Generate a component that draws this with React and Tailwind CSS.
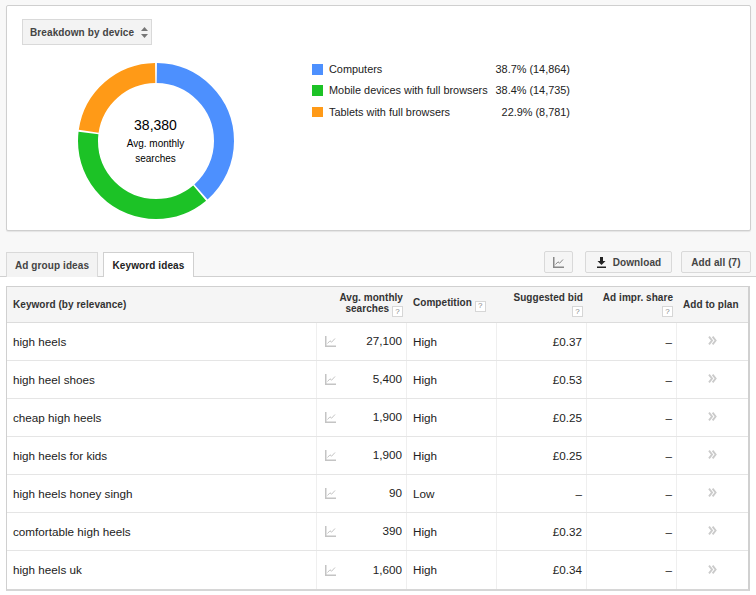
import React from 'react';

const legend = [
  { label: 'Computers', value: '38.7% (14,864)', color: 'bg-[#4d90fe]' },
  { label: 'Mobile devices with full browsers', value: '38.4% (14,735)', color: 'bg-[#1cc226]' },
  { label: 'Tablets with full browsers', value: '22.9% (8,781)', color: 'bg-[#ff9a17]' },
];

const rows = [
  { keyword: 'high heels', searches: '27,100', competition: 'High', bid: '£0.37' },
  { keyword: 'high heel shoes', searches: '5,400', competition: 'High', bid: '£0.53' },
  { keyword: 'cheap high heels', searches: '1,900', competition: 'High', bid: '£0.25' },
  { keyword: 'high heels for kids', searches: '1,900', competition: 'High', bid: '£0.25' },
  { keyword: 'high heels honey singh', searches: '90', competition: 'Low', bid: '–' },
  { keyword: 'comfortable high heels', searches: '390', competition: 'High', bid: '£0.32' },
  { keyword: 'high heels uk', searches: '1,600', competition: 'High', bid: '£0.34' },
];

function TrendIcon({ className = 'text-[#c4c4c4]' }) {
  return (
    <svg width="11" height="11" viewBox="0 0 11 11" className={className} fill="none" stroke="currentColor">
      <path d="M0.75 0v10.25H11" strokeWidth="1.5" />
      <path d="M2.500 7.500L5 4.800l1.600 1.400L10 2.500" strokeWidth="1" />
    </svg>
  );
}

function AddIcon() {
  return (
    <svg width="9" height="9" viewBox="0 0 9 9" fill="none" stroke="#cbcbcb" strokeWidth="1.9">
      <path d="M1 0.700L4 4.500L1 8.300" />
      <path d="M4.600 0.700L7.600 4.500L4.600 8.300" />
    </svg>
  );
}

function Help() {
  return (
    <span className="inline-flex h-[11px] w-[11px] items-center justify-center border border-[#d6d6d6] bg-white align-[-2px] text-[8px] font-normal leading-none text-[#888]">
      ?
    </span>
  );
}

function Donut() {
  const r = 68;
  return (
    <div className="relative h-[158px] w-[158px]">
      <svg width="158" height="158" viewBox="0 0 158 158" className="-rotate-90">
        <circle cx="79" cy="79" r={r} fill="none" stroke="#4d90fe" strokeWidth="20" pathLength="100" strokeDasharray="38.3 61.7" strokeDashoffset="-0.2" />
        <circle cx="79" cy="79" r={r} fill="none" stroke="#1cc226" strokeWidth="20" pathLength="100" strokeDasharray="38 62" strokeDashoffset="-38.9" />
        <circle cx="79" cy="79" r={r} fill="none" stroke="#ff9a17" strokeWidth="20" pathLength="100" strokeDasharray="22.5 77.5" strokeDashoffset="-77.3" />
      </svg>
      <div className="absolute inset-0 flex flex-col items-center justify-center pt-[1px] text-center text-black">
        <div className="text-[14px] leading-[16px]">38,380</div>
        <div className="mt-[3px] w-[80px] text-[10px] leading-[15px]">Avg. monthly searches</div>
      </div>
    </div>
  );
}

export default function App() {
  return (
    <div className="h-[595px] w-[756px] overflow-hidden bg-white font-['Liberation_Sans',Arial,sans-serif] text-[#222]">
      <div className="border-b border-[#d0d0d0] bg-[#f8f8f8] pl-[6px] pr-[5px] pt-[5px]">
        <div className="h-[226px] rounded-[2px] border border-[#cfcfcf] bg-white pl-[15px] pt-[13px] shadow-[0_1px_1px_rgba(0,0,0,0.08)]">
          <button className="flex h-[26px] w-[130px] items-center gap-[7px] whitespace-nowrap border border-[#d9d9d9] bg-[#f3f3f3] pl-[7px] text-[10px] font-bold tracking-[0.1px] text-[#444]">
            Breakdown by device
            <svg width="7" height="11" viewBox="0 0 7 11" className="text-[#777]" fill="currentColor">
              <path d="M3.500 0L7 4H0zM0 7h7L3.500 11z" />
            </svg>
          </button>
          <div className="mt-[9px] flex items-start">
            <div className="ml-[54.5px] mt-[7.5px]">
              <Donut />
            </div>
            <div className="ml-[77.5px] mt-[5px] w-[258px] text-[10.9px] text-[#222]">
              {legend.map((item) => (
                <div key={item.label} className="flex h-[21px] items-center last:mt-[0.5px]">
                  <span className={`h-[10.5px] w-[10.5px] ${item.color}`} />
                  <span className="ml-[6.5px] flex-1">{item.label}</span>
                  <span>{item.value}</span>
                </div>
              ))}
            </div>
          </div>
        </div>
        <div className="mt-[20px] flex h-[25px] items-end justify-between">
          <div className="flex gap-[5px] text-[10px] font-bold tracking-[0.1px]">
            <div className="mb-[-1px] flex h-[25px] w-[92px] items-center justify-center border border-b-0 border-[#d9d9d9] bg-[#f3f3f3] text-[#444]">
              Ad group ideas
            </div>
            <div className="relative mb-[-1px] flex h-[25px] w-[91px] items-center justify-center border border-b-0 border-[#d0d0d0] bg-white text-[#222]">
              Keyword ideas
            </div>
          </div>
          <div className="mb-[3px] flex text-[10px] font-bold tracking-[0.1px] text-[#444]">
            <button className="mr-[12px] flex h-[22px] w-[29px] items-center justify-center rounded-[2px] border border-[#d9d9d9] bg-[#f5f5f5]">
              <TrendIcon className="text-[#888]" />
            </button>
            <button className="mr-[9px] flex h-[22px] w-[87px] items-center justify-center gap-[6px] rounded-[2px] border border-[#d9d9d9] bg-[#f5f5f5]">
              <svg width="11" height="11" viewBox="0 0 11 11" fill="#222">
                <path d="M4 0h3v4h2.500L5.500 8 1.500 4H4zM1 9.500h9V11H1z" />
              </svg>
              Download
            </button>
            <button className="flex h-[22px] w-[70px] items-center justify-center rounded-[2px] border border-[#d9d9d9] bg-[#f5f5f5]">
              Add all (7)
            </button>
          </div>
        </div>
      </div>

      <div className="ml-[6px] mt-[9px] w-[744px] border-b-2 border-l border-r-2 border-t border-[#d0d0d0] border-b-[#d6d6d6]">
        <div className="grid h-[36px] grid-cols-[309px_90px_90px_90px_90px_1fr] items-center border-b border-[#dcdcdc] bg-[#f5f5f5] text-[10px] font-bold leading-[11px] tracking-[0.05px] text-[#333]">
          <div className="pl-[6px]">Keyword (by relevance)</div>
          <div className="pr-[3px] text-right">
            Avg. monthly
            <br />
            searches <Help />
          </div>
          <div className="pl-[7px]">
            Competition <Help />
          </div>
          <div className="pr-[3px] text-right">
            Suggested bid
            <br />
            <Help />
          </div>
          <div className="pr-[3px] text-right">
            Ad impr. share
            <br />
            <Help />
          </div>
          <div className="pl-[7px]">Add to plan</div>
        </div>
        {rows.map((row, i) => (
          <div
            key={row.keyword}
            className={`grid h-[38px] grid-cols-[309px_90px_90px_90px_90px_1fr] text-[11.7px] text-[#222] ${i < rows.length - 1 ? 'border-b border-[#e5e5e5]' : ''}`}
          >
            <div className="flex items-center pl-[6px]">{row.keyword}</div>
            <div className="flex items-center justify-between border-l border-[#efefef] pl-[8px] pr-[4px]">
              <TrendIcon />
              <span className="-mt-[1px]">{row.searches}</span>
            </div>
            <div className="flex items-center border-l border-[#efefef] pl-[6px]">{row.competition}</div>
            <div className="flex items-center justify-end border-l border-[#efefef] pr-[4px]">{row.bid}</div>
            <div className="flex items-center justify-end border-l border-[#efefef] pr-[4px]">–</div>
            <div className="flex items-center justify-center border-l border-[#efefef] pb-[2px]">
              <AddIcon />
            </div>
          </div>
        ))}
      </div>
    </div>
  );
}
